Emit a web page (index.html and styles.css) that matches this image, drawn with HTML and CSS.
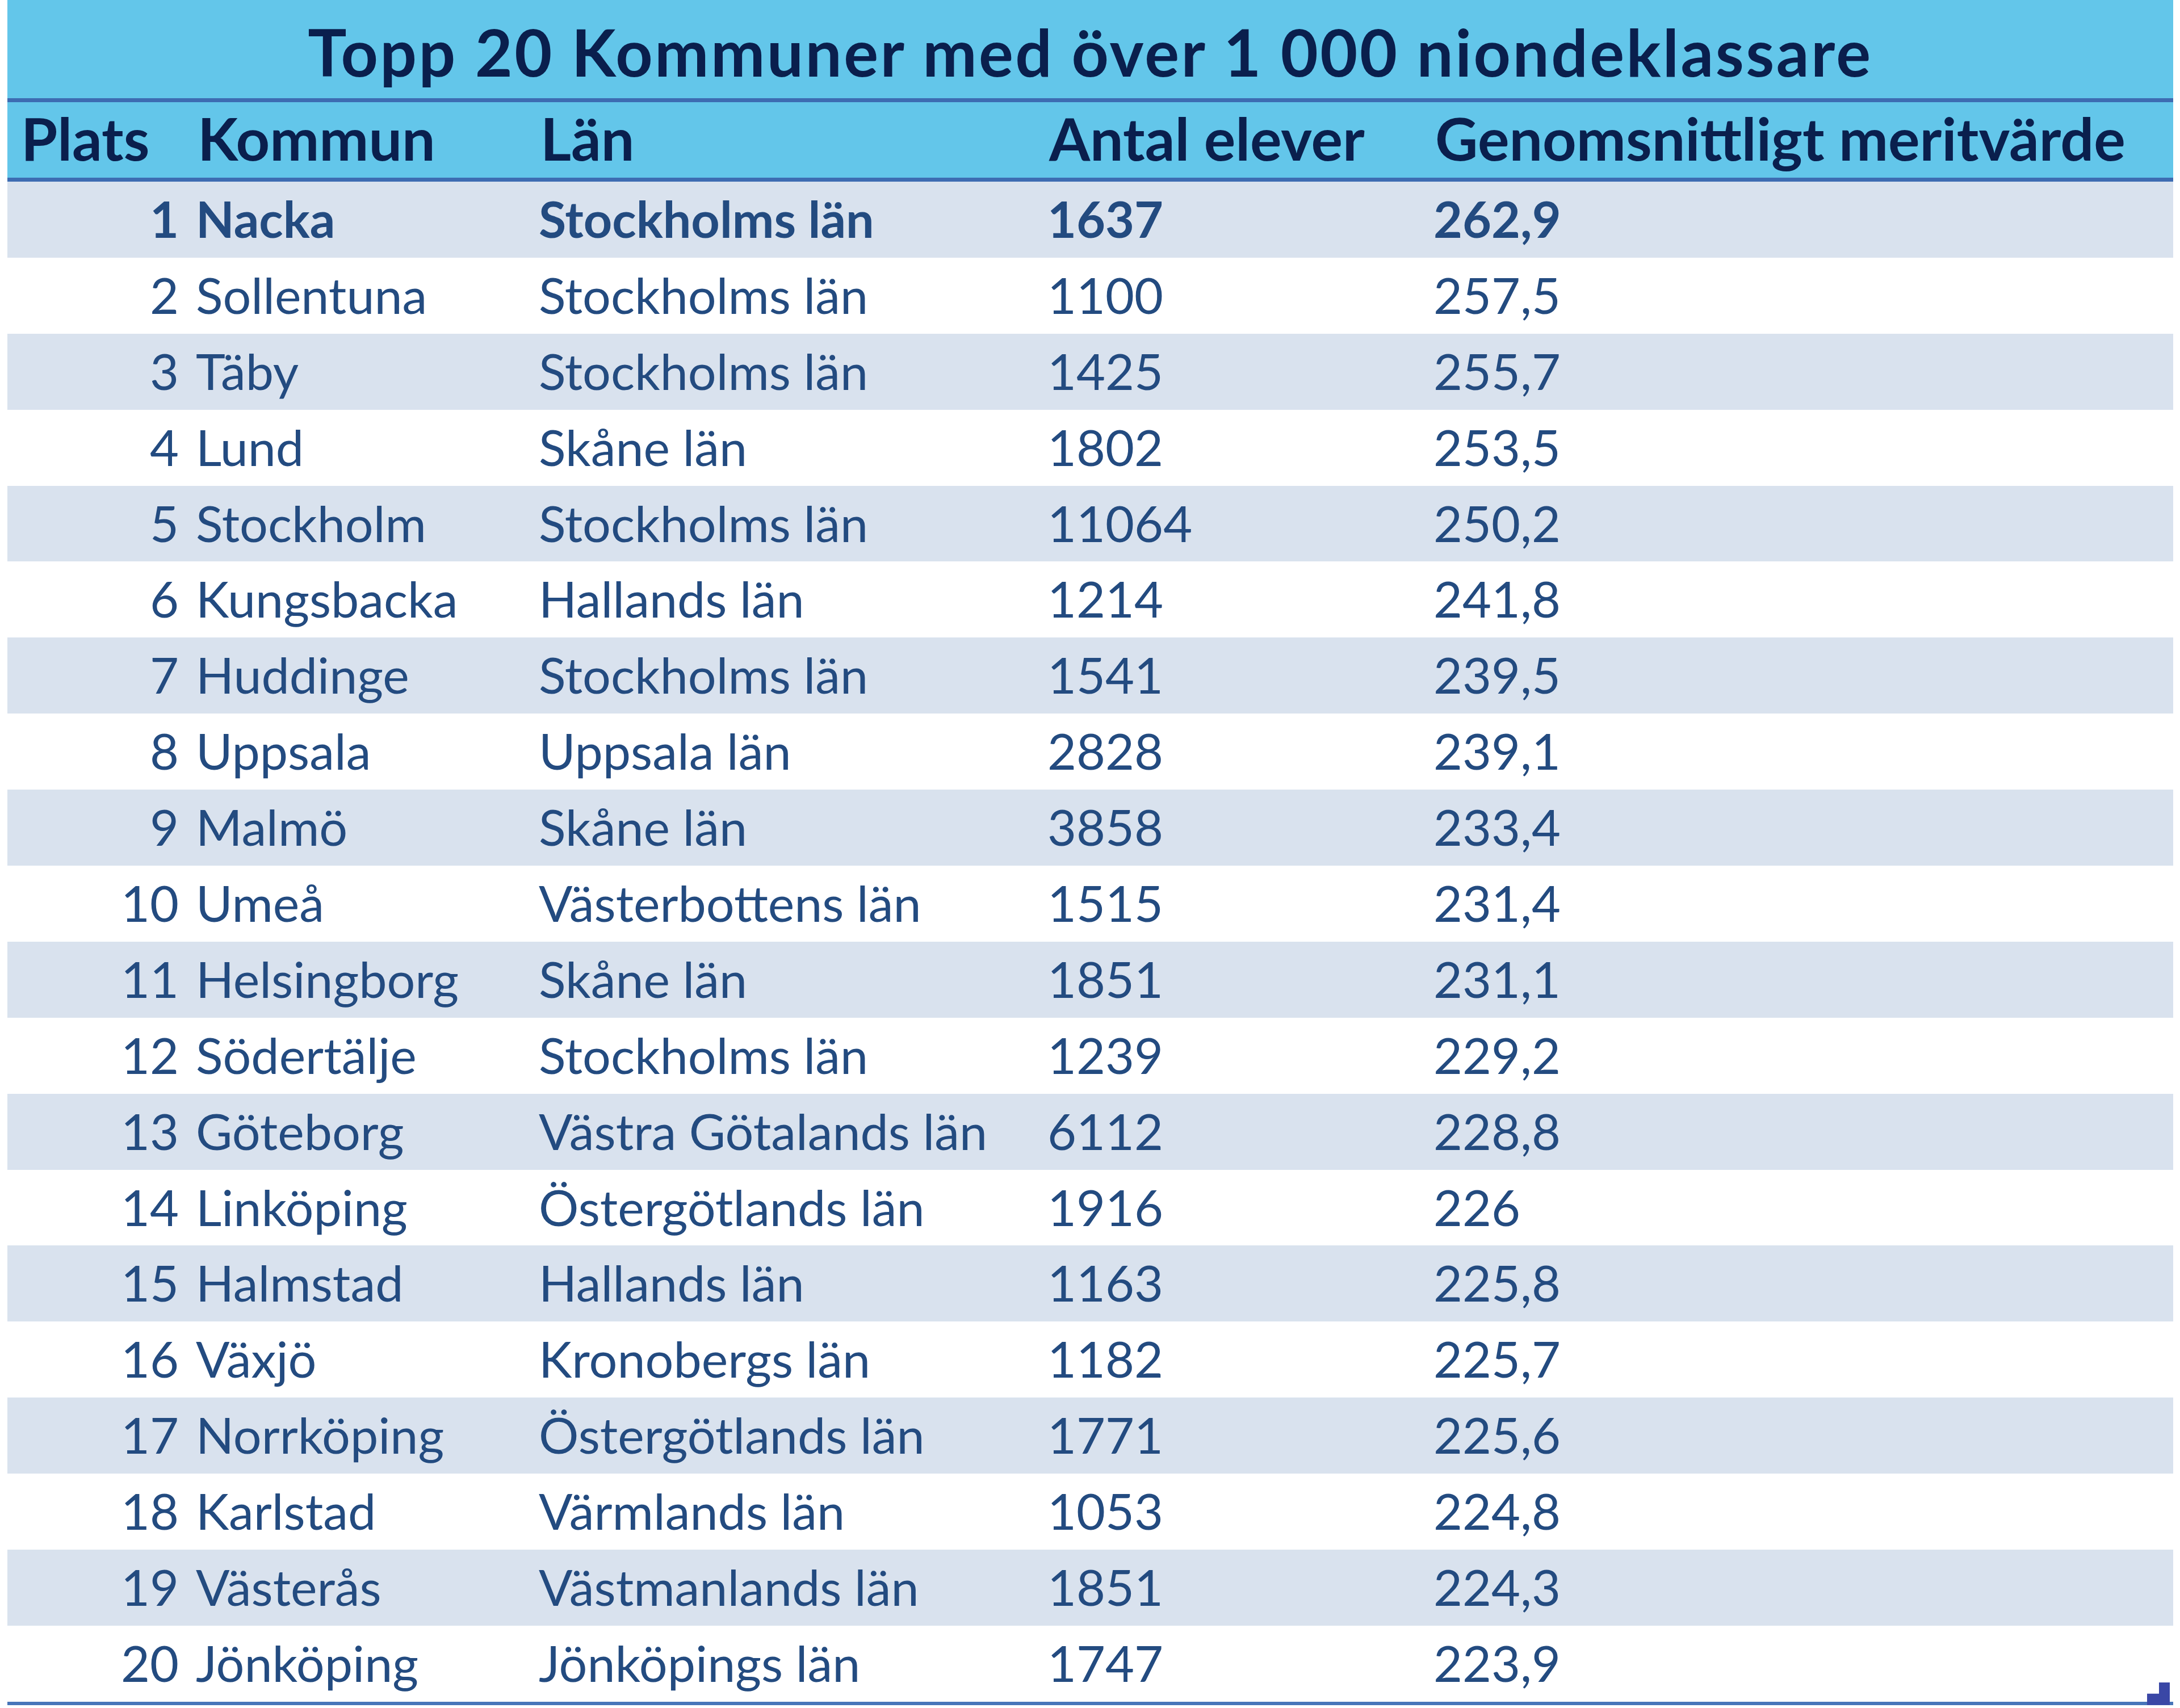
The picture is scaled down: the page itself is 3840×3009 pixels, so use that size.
FILE: index.html
```html
<!DOCTYPE html>
<html lang="sv">
<head>
<meta charset="utf-8">
<title>Topp 20 Kommuner</title>
<link rel="stylesheet" href="styles.css">
</head>
<body>
<div class="sheet">
  <div class="title">Topp 20 Kommuner med över 1 000 niondeklassare</div>
  <div class="row head">
    <div class="c plats">Plats</div>
    <div class="c">Kommun</div>
    <div class="c">Län</div>
    <div class="c">Antal elever</div>
    <div class="c">Genomsnittligt meritvärde</div>
  </div>
  <div class="row band bold"><div class="c num">1</div><div class="c">Nacka</div><div class="c">Stockholms län</div><div class="c">1637</div><div class="c">262,9</div></div>
  <div class="row"><div class="c num">2</div><div class="c">Sollentuna</div><div class="c">Stockholms län</div><div class="c">1100</div><div class="c">257,5</div></div>
  <div class="row band"><div class="c num">3</div><div class="c">Täby</div><div class="c">Stockholms län</div><div class="c">1425</div><div class="c">255,7</div></div>
  <div class="row"><div class="c num">4</div><div class="c">Lund</div><div class="c">Skåne län</div><div class="c">1802</div><div class="c">253,5</div></div>
  <div class="row band"><div class="c num">5</div><div class="c">Stockholm</div><div class="c">Stockholms län</div><div class="c">11064</div><div class="c">250,2</div></div>
  <div class="row"><div class="c num">6</div><div class="c">Kungsbacka</div><div class="c">Hallands län</div><div class="c">1214</div><div class="c">241,8</div></div>
  <div class="row band"><div class="c num">7</div><div class="c">Huddinge</div><div class="c">Stockholms län</div><div class="c">1541</div><div class="c">239,5</div></div>
  <div class="row"><div class="c num">8</div><div class="c">Uppsala</div><div class="c">Uppsala län</div><div class="c">2828</div><div class="c">239,1</div></div>
  <div class="row band"><div class="c num">9</div><div class="c">Malmö</div><div class="c">Skåne län</div><div class="c">3858</div><div class="c">233,4</div></div>
  <div class="row"><div class="c num">10</div><div class="c">Umeå</div><div class="c">Västerbottens län</div><div class="c">1515</div><div class="c">231,4</div></div>
  <div class="row band"><div class="c num">11</div><div class="c">Helsingborg</div><div class="c">Skåne län</div><div class="c">1851</div><div class="c">231,1</div></div>
  <div class="row"><div class="c num">12</div><div class="c">Södertälje</div><div class="c">Stockholms län</div><div class="c">1239</div><div class="c">229,2</div></div>
  <div class="row band"><div class="c num">13</div><div class="c">Göteborg</div><div class="c">Västra Götalands län</div><div class="c">6112</div><div class="c">228,8</div></div>
  <div class="row"><div class="c num">14</div><div class="c">Linköping</div><div class="c">Östergötlands län</div><div class="c">1916</div><div class="c">226</div></div>
  <div class="row band"><div class="c num">15</div><div class="c">Halmstad</div><div class="c">Hallands län</div><div class="c">1163</div><div class="c">225,8</div></div>
  <div class="row"><div class="c num">16</div><div class="c">Växjö</div><div class="c">Kronobergs län</div><div class="c">1182</div><div class="c">225,7</div></div>
  <div class="row band"><div class="c num">17</div><div class="c">Norrköping</div><div class="c">Östergötlands län</div><div class="c">1771</div><div class="c">225,6</div></div>
  <div class="row"><div class="c num">18</div><div class="c">Karlstad</div><div class="c">Värmlands län</div><div class="c">1053</div><div class="c">224,8</div></div>
  <div class="row band"><div class="c num">19</div><div class="c">Västerås</div><div class="c">Västmanlands län</div><div class="c">1851</div><div class="c">224,3</div></div>
  <div class="row last"><div class="c num">20</div><div class="c">Jönköping</div><div class="c">Jönköpings län</div><div class="c">1747</div><div class="c">223,9</div></div>
  <div class="handle"></div>
</div>
</body>
</html>
```

FILE: styles.css
```css
html, body {
  margin: 0;
  padding: 0;
  background: #ffffff;
}

.sheet {
  position: relative;
  margin-left: 13px;
  width: 3815px;
  font-family: Lato, "Open Sans", sans-serif;
  color: #234b80;
}

.title {
  height: 180px;
  box-sizing: border-box;
  padding-top: 10px;
  background: #63c6ea;
  border-bottom: 7px solid #3d6cb2;
  text-align: center;
  font-weight: 700;
  font-size: 114px;
  line-height: 162px;
  letter-spacing: 3.4px;
  color: #0a1f4d;
  white-space: nowrap;
}

.row {
  display: grid;
  grid-template-columns: 332px 604px 896px 680px 1fr;
  align-items: center;
  height: 133.9px;
  font-size: 88px;
  white-space: nowrap;
}

.row .c {
  padding-bottom: 4px;
}

.row.head {
  height: 133px;
  background: #63c6ea;
  border-bottom: 7px solid #3d6cb2;
  font-weight: 700;
  font-size: 104px;
  color: #0a1f4d;
}

.row.head .c {
  padding-left: 3px;
  padding-bottom: 9px;
}

.row.head .c.plats {
  padding-left: 24px;
}

.row .c.num {
  text-align: right;
  padding-right: 30px;
}

.row.band {
  background: #d9e2ee;
}

.row.bold {
  font-weight: 700;
}

.row.last {
  border-bottom: 6px solid #4775b9;
}

.handle {
  position: absolute;
  right: 6px;
  bottom: 0;
  width: 40px;
  height: 40px;
  background: #3a47a6;
  clip-path: polygon(21px 0, 40px 0, 40px 40px, 0 40px, 0 20px, 21px 20px);
}
```
